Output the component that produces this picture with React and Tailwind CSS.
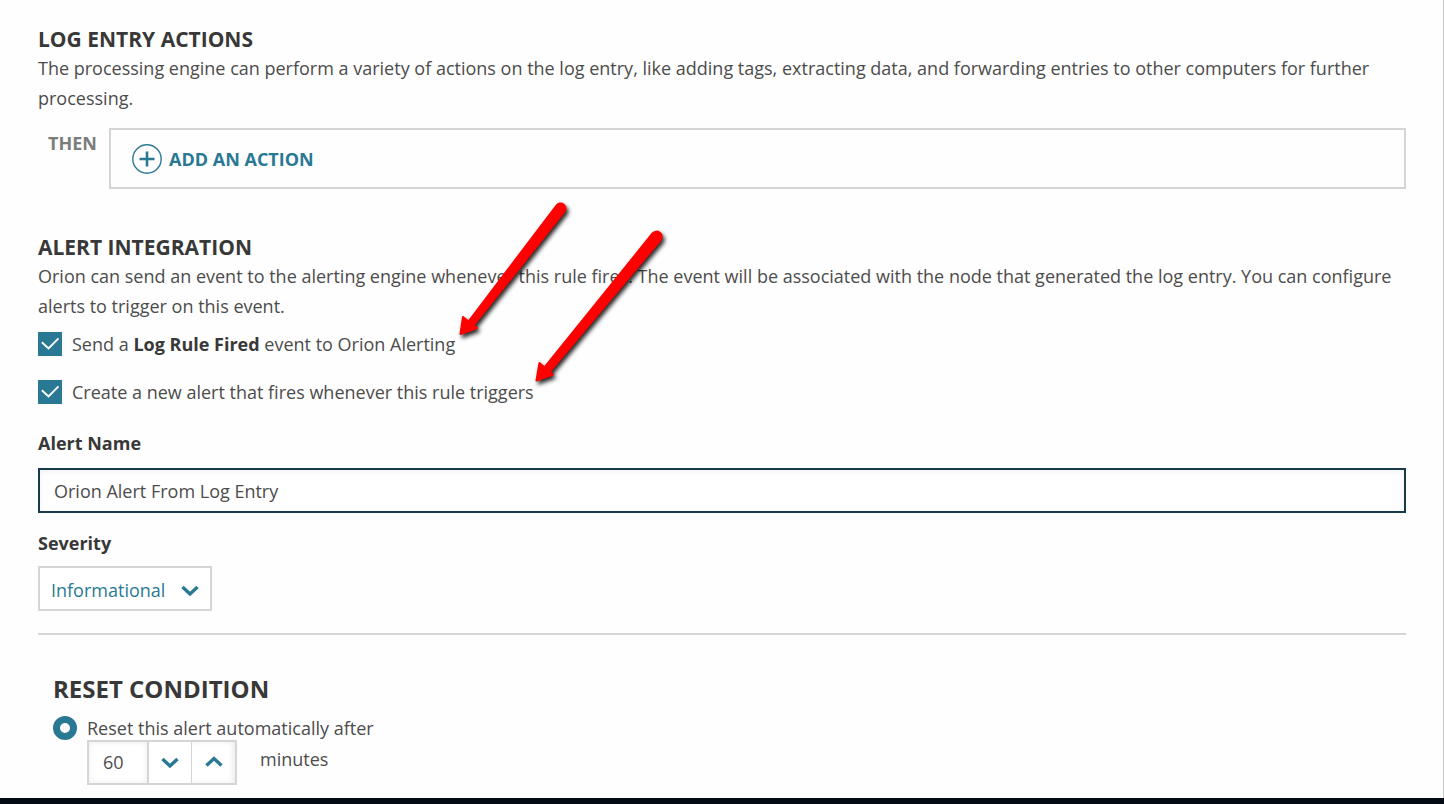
import { useState } from "react";

function Chevron({ up = false, className = "" }) {
  return (
    <svg viewBox="0 0 18 12" aria-hidden="true" className={`h-3 w-[18px] overflow-visible ${className}`}>
      <path
        d={up ? "M1.5 8.5 9 1.5l7.5 7" : "M1.5 2 9 9l7.5-7"}
        fill="none"
        stroke="#297994"
        strokeWidth="3.4"
      />
    </svg>
  );
}

function CheckOption({ id, children }) {
  return (
    <div className="flex h-6 items-center gap-[10px]">
      <span className="relative flex size-6 shrink-0">
        <input
          id={id}
          type="checkbox"
          defaultChecked
          className="peer size-6 appearance-none border-2 border-[#d5d5d5] bg-white checked:border-[#297994] checked:bg-[#297994]"
        />
        <svg
          viewBox="0 0 24 24"
          aria-hidden="true"
          className="pointer-events-none absolute inset-0 hidden size-6 peer-checked:block"
        >
          <path d="M3.8 10.3 10.5 16.5 20.5 6.3" fill="none" stroke="#fff" strokeWidth="1.9" />
        </svg>
      </span>
      <label htmlFor={id}>{children}</label>
    </div>
  );
}

function Arrow({ className, viewBox, shape }) {
  return (
    <svg
      viewBox={viewBox}
      aria-hidden="true"
      className={`pointer-events-none absolute overflow-visible drop-shadow-[2px_3px_2px_rgba(0,0,0,0.85)] ${className}`}
    >
      <path d={shape} fill="#fe0000" stroke="#fe0000" strokeWidth="2" strokeLinejoin="round" />
    </svg>
  );
}

export default function App() {
  const [minutes, setMinutes] = useState(60);

  return (
    <div className="bg-[#040a14] pb-[6px] font-['Open_Sans',sans-serif] text-[18px] leading-[30px] text-[#4c4c4c]">
      <main className="relative border-r border-[#c4c4c4] bg-[#fefefe] pt-[25px] pr-[37px] pb-[13px] pl-[38px]">
        <section>
          <h2 className="text-[21px] leading-7 font-bold text-[#383838]">LOG ENTRY ACTIONS</h2>
          <p>
            The processing engine can perform a variety of actions on the log entry, like adding
            tags, extracting data, and forwarding entries to other computers for further processing.
          </p>
          <div className="mt-[15px] flex">
            <div className="w-[71px] shrink-0 pl-[10px] font-bold text-[#7c7c7c]">THEN</div>
            <div className="flex h-[61px] grow items-center border-2 border-[#d5d5d5] px-[21px]">
              <button type="button" className="flex items-center gap-[7px] font-bold text-[#297994]">
                <svg viewBox="0 0 30 30" aria-hidden="true" className="size-[30px]">
                  <circle cx="15" cy="15" r="14.2" fill="none" stroke="#297994" strokeWidth="1.4" />
                  <path d="M7.5 15h15M15 7.5v15" stroke="#297994" strokeWidth="2.6" />
                </svg>
                ADD AN ACTION
              </button>
            </div>
          </div>
        </section>

        <section className="mt-11">
          <h2 className="text-[21px] leading-7 font-bold text-[#383838]">ALERT INTEGRATION</h2>
          <p>
            Orion can send an event to the alerting engine whenever this rule fires. The event will
            be associated with the node that generated the log entry. You can configure alerts to
            trigger on this event.
          </p>
          <div className="mt-[11px] flex flex-col gap-6">
            <CheckOption id="send-event">
              Send a <strong className="font-bold text-[#383838]">Log Rule Fired</strong> event to
              Orion Alerting
            </CheckOption>
            <CheckOption id="create-alert">
              Create a new alert that fires whenever this rule triggers
            </CheckOption>
          </div>

          <label htmlFor="alert-name" className="mt-6 block font-bold text-[#383838]">
            Alert Name
          </label>
          <input
            id="alert-name"
            type="text"
            defaultValue="Orion Alert From Log Entry"
            className="mt-[10px] block h-[45px] w-full border-2 border-[#173a4d] bg-white px-[14px] shadow-[inset_0_2px_5px_rgba(0,0,0,0.06)] outline-none"
          />

          <label htmlFor="severity" className="mt-[15px] block font-bold text-[#383838]">
            Severity
          </label>
          <div className="relative mt-2 w-[174px]">
            <select
              id="severity"
              defaultValue="Informational"
              className="block h-[45px] w-full appearance-none border-2 border-[#d5d5d5] bg-white pt-[2px] pl-[11px] text-[#297994]"
            >
              <option>Informational</option>
              <option>Notice</option>
              <option>Warning</option>
              <option>Serious</option>
              <option>Critical</option>
            </select>
            <Chevron className="pointer-events-none absolute top-[19px] right-[13px]" />
          </div>
          <hr className="mt-[22px] border-t-2 border-[#d5d5d5]" />
        </section>

        <section className="pt-[39px] pl-[15px]">
          <h2 className="text-[24px] leading-[30px] font-bold text-[#383838]">RESET CONDITION</h2>
          <div className="mt-3 flex h-6 items-center gap-[10px]">
            <input
              id="reset-auto"
              type="radio"
              name="reset"
              defaultChecked
              className="size-6 shrink-0 appearance-none rounded-full border-[7px] border-[#297994] bg-white"
            />
            <label htmlFor="reset-auto">Reset this alert automatically after</label>
          </div>
          <div className="flex pl-[34px]">
            <div className="flex h-[45px] w-[150px] border-2 border-[#d5d5d5] bg-white">
              <input
                id="reset-minutes"
                type="text"
                inputMode="numeric"
                value={minutes}
                onChange={(e) => setMinutes(Number(e.target.value) || 0)}
                className="w-[60px] border-r-2 border-[#d5d5d5] pb-[2px] pl-[14px] shadow-[inset_0_0_6px_rgba(0,0,0,0.08)] outline-none"
              />
              <button
                type="button"
                aria-label="Decrease"
                onClick={() => setMinutes(Math.max(0, minutes - 1))}
                className="flex w-[43px] items-center justify-center border-r border-[#d5d5d5]"
              >
                <Chevron />
              </button>
              <button
                type="button"
                aria-label="Increase"
                onClick={() => setMinutes(minutes + 1)}
                className="flex flex-1 items-center justify-center shadow-[inset_-3px_0_5px_rgba(0,0,0,0.07)]"
              >
                <Chevron up />
              </button>
            </div>
            <label htmlFor="reset-minutes" className="ml-[23px] pt-1">
              minutes
            </label>
          </div>
        </section>

        <Arrow
          className="top-[200px] left-[455px] h-[140px] w-[115px]"
          viewBox="455 200 115 140"
          shape="M460.500 334 463 317 468.500 321.500 556.500 205.500A5 5 0 0 1 564.500 211.500L473.500 325.500 477 328Z"
        />
        <Arrow
          className="top-[228px] left-[530px] h-[157px] w-[135px]"
          viewBox="530 228 135 157"
          shape="M536.500 380.500 539.500 363 544.500 367.500 652.500 233.500A5 5 0 0 1 660.500 240L549.500 372 553 374.500Z"
        />
      </main>
    </div>
  );
}
